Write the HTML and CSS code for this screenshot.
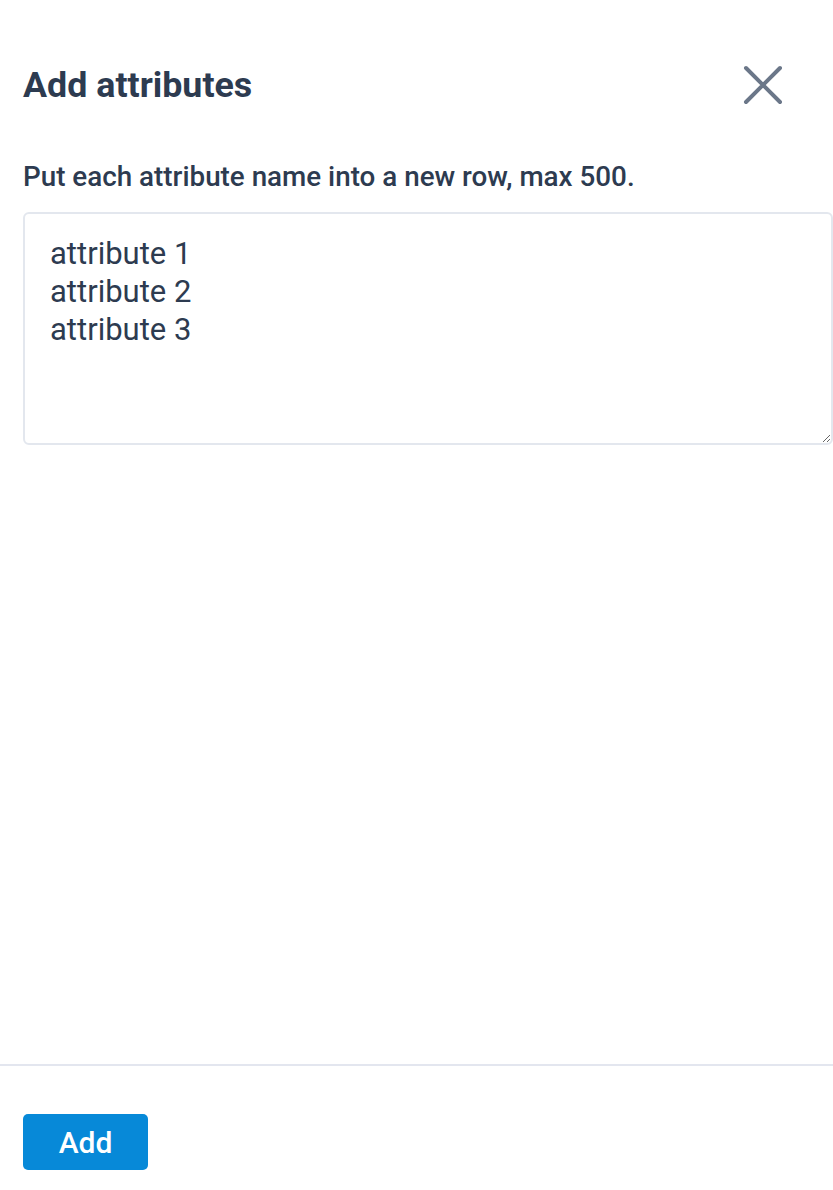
FILE: index.html
```html
<!DOCTYPE html>
<html lang="en">
<head>
    <meta charset="UTF-8">
    <meta name="viewport" content="width=device-width, initial-scale=1.0">
    <title>Add attributes</title>
    <link rel="stylesheet" href="styles.css">
</head>
<body>
    <div class="panel">
        <!-- Header -->
        <div class="panel-header">
            <h1>Add attributes</h1>
            <button class="close" aria-label="Close">
                <svg width="40" height="40" viewBox="0 0 40 40">
                    <path d="M3 3 L37 37 M37 3 L3 37" stroke="currentColor" stroke-width="4" stroke-linecap="round"/>
                </svg>
            </button>
        </div>

        <!-- Body -->
        <div class="panel-body">
            <label class="hint" for="names">Put each attribute name into a new row, max 500.</label>
            <textarea id="names" class="names">attribute 1
attribute 2
attribute 3</textarea>
        </div>

        <!-- Footer -->
        <div class="panel-footer">
            <button class="btn-primary">Add</button>
        </div>
    </div>
</body>
</html>
```

FILE: styles.css
```css
* {
    margin: 0;
    padding: 0;
    box-sizing: border-box;
}

body {
    font-family: Roboto, "Noto Sans", sans-serif;
    background: #fff;
    color: #2d3b50;
    height: 100vh;
    overflow: hidden;
}

.panel {
    height: 100vh;
    display: flex;
    flex-direction: column;
}

/* Header */
.panel-header {
    display: flex;
    align-items: center;
    justify-content: space-between;
    padding: 61px 50px 0 23px;
    height: 108px;
}

h1 {
    font-size: 35.8px;
    line-height: 44px;
    font-weight: 700;
}

.close {
    background: none;
    border: none;
    color: #6b7789;
    width: 40px;
    height: 40px;
    cursor: pointer;
    display: flex;
}

/* Body */
.panel-body {
    flex: 1;
    display: flex;
    flex-direction: column;
    padding: 53px 0 0 23px;
}

.hint {
    font-size: 27.8px;
    line-height: 32px;
    font-weight: 500;
    margin-bottom: 19px;
}

.names {
    width: 100%;
    height: 233px;
    border: 2px solid #e3e7ee;
    border-radius: 6px;
    padding: 21px 25px;
    font-family: Roboto, "Noto Sans", sans-serif;
    font-size: 31px;
    line-height: 38px;
    color: #2d3b50;
    outline: none;
}

/* Footer */
.panel-footer {
    border-top: 2px solid #e3e6ef;
    height: 126px;
    padding: 48px 23px 0;
}

.btn-primary {
    background: #0789d8;
    color: #fff;
    border: none;
    border-radius: 5px;
    width: 125px;
    height: 56px;
    font-family: Roboto, "Noto Sans", sans-serif;
    font-size: 30px;
    font-weight: 500;
    cursor: pointer;
}
```
